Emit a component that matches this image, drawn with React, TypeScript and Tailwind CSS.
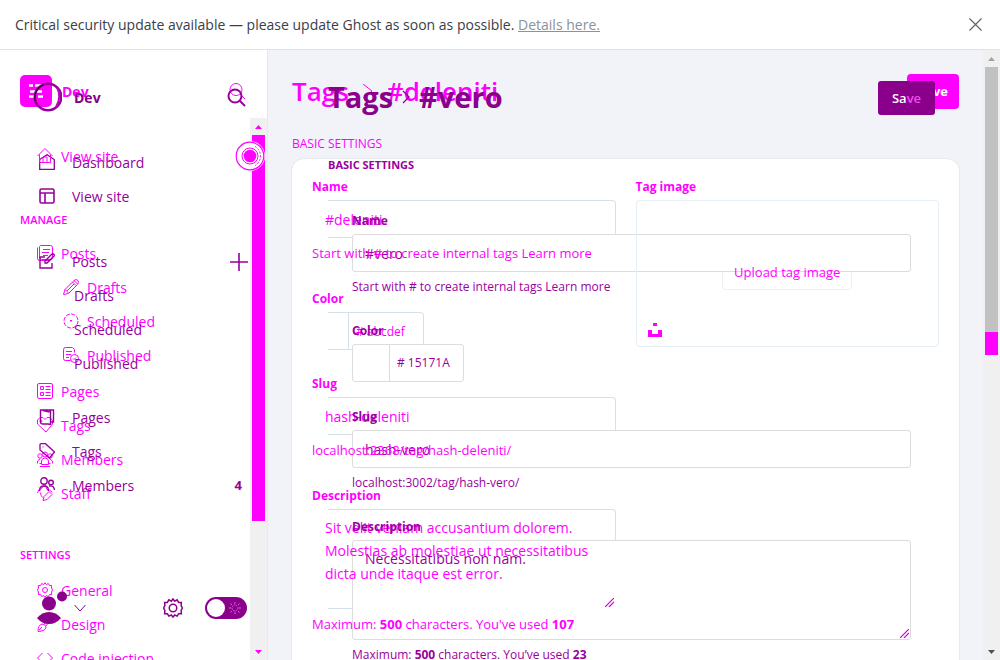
import React from "react";

type Tone = "pink" | "plum";
type NavItem = { label: string; icon?: React.ReactNode; sub?: boolean };

function Icon({ children, size = 16 }: { children: React.ReactNode; size?: number }) {
  return (
    <svg width={size} height={size} viewBox={`0 0 ${size} ${size}`} fill="none" stroke="currentColor" strokeWidth="1" className="shrink-0" aria-hidden="true">
      {children}
    </svg>
  );
}

const gearPath =
  "M8 .7 9.3 2.6 11.3 1.5 12.5 3.5 14.7 3.5 14.5 6 15.5 8 14.5 10 14.7 12.5 12.5 12.5 11.3 14.5 9.3 13.6 8 15.3 6.7 13.6 4.7 14.5 3.5 12.5 1.3 12.5 1.5 10 .5 8 1.5 6 1.3 3.5 3.5 3.5 4.7 1.5 6.7 2.6Z";

const pinkManage: NavItem[] = [
  { label: "Posts", icon: <Icon><path d="M3.5.5h10a2 2 0 0 1 2 2v10a2 2 0 0 1-2 2h-9a2 2 0 0 1-2-2v-11zM.5 2.5v11a2 2 0 0 0 2 2h11M6 4.5h7M5 7.5h7M6 10.5h5" /></Icon> },
  { label: "Drafts", sub: true, icon: <Icon><path d="m.5 15.5 1.500-5 9-9q2-2 4 0 1.500 2-.5 4l-9 9zM2 10.500l3.500 3.500M9.500 3l3.500 3.500M11 1.500l3.500 3.500M4 12l7-7" /></Icon> },
  { label: "Scheduled", sub: true, icon: <Icon><circle cx="8" cy="8" r="7" strokeDasharray="4 1.500" /><path d="M7 7.500h2M8 7v2" /></Icon> },
  { label: "Published", sub: true, icon: <Icon><path d="M7.500 13.500h-5a2 2 0 0 1-2-2v-9a2 2 0 0 1 2-2h7l2 2v3M3 4.500h6M3 7.500h5M3 10.500h3" /><circle cx="11.500" cy="11.500" r="4" /><path d="m10 11.500 1 1 2-2" /></Icon> },
];

const pinkLower: NavItem[] = [
  { label: "Pages", icon: <Icon><rect x=".5" y=".5" width="15" height="15" rx="1.500" /><path d="M3.500 3.500h3v3h-3zM3.500 9.500h3v3h-3zM8.500 3.500h5M8.500 6.500h5M8.500 9.500h5M8.500 12.500h5" /></Icon> },
  { label: "Tags", icon: <Icon><path d="M.5 7V3L3 .5h3L8 2.500l2-2h3l2.500 3v3.500L9 15z" /><circle cx="4" cy="4" r="1" /></Icon> },
  { label: "Members", icon: <Icon><circle cx="8" cy="3.500" r="2.500" /><circle cx="3" cy="5" r="2.200" /><circle cx="13" cy="5" r="2.200" /><path d="M4.500 13.500V10q.5-3 3.500-3t3.500 3v3.500zM.5 12.500V10L3 8M2.500 12.500h2M15.500 12.500V10L13 8M13.500 12.500h-2M3 15.500h10" /></Icon> },
  { label: "Staff", icon: <Icon><path d="M.5 8Q1 4 4.500 3.500q1-3 4-3L10 4.500q4 0 5 3M3.500 7.500q0 3 2 5M6 15.500l1-4 5-5 3 3-5 5z" /></Icon> },
];

const pinkSettings: NavItem[] = [
  { label: "General", icon: <Icon><path d={gearPath} /><circle cx="8" cy="8" r="2.500" /></Icon> },
  { label: "Design", icon: <Icon><path d="M15.500.5 7 8M15.500.5 9 10M5 8q3 0 4 3 0 4-8 4.500Q1 9 5 8zM2 14l3-3" /></Icon> },
  { label: "Code injection", icon: <Icon><path d="M5.500 3 .5 8l5 5M10.500 3l5 5-5 5" /></Icon> },
];

const plumTop: NavItem[] = [
  { label: "Dashboard", icon: <Icon><path d="M.7 15.300h14.600V5.500L8 .7.700 5.500z" strokeWidth="1.300" /></Icon> },
  { label: "View site", icon: <Icon><path d="M2.500 1h11A1.500 1.500 0 0 1 15 2.500v11a1.500 1.500 0 0 1-1.500 1.500h-11A1.500 1.500 0 0 1 1 13.500v-11A1.500 1.500 0 0 1 2.500 1zM1 5h14M6 5v10" strokeWidth="1.600" /></Icon> },
];

const plumPosts: NavItem[] = [
  { label: "Posts", icon: <Icon><path d="M6 4H1v11h12v-5M6 10V8l7-7q1-.5 2 .5.500.8 0 1.500l-7 7z" strokeWidth="1.400" /></Icon> },
  { label: "Drafts", sub: true },
  { label: "Scheduled", sub: true },
  { label: "Published", sub: true },
];

const plumLower: NavItem[] = [
  { label: "Pages", icon: <Icon><path d="M1.500 1h9l1 1.500v13L9 15H4q-2.500 0-2.500-2zM4 1.500l6.500 1.500M10.500 1h4v12h-3" strokeWidth="1.400" /></Icon> },
  { label: "Tags", icon: <Icon><path d="M1 1.500Q1 .7 2 .7h4.500L15.500 9l-5 6L1 7z" strokeWidth="1.300" /><path d="M3.500 4h1" /></Icon> },
  { label: "Members", icon: <Icon><circle cx="5" cy="4" r="3.200" strokeWidth="1.400" /><circle cx="12" cy="5.500" r="2.300" strokeWidth="1.400" /><path d="M.7 14v-1.500Q1 9 5 9t4.300 3.500V14M10 9q5-1 5.500 4" strokeWidth="1.400" /></Icon> },
];

function NavList({ items, tone }: { items: NavItem[]; tone: Tone }) {
  const pink = tone === "pink";
  return (
    <ul>
      {items.map((it) => (
        <li key={it.label} className={pink ? (it.sub ? "pl-[63px]" : "pl-[37px]") : it.sub ? "pl-[74px]" : "pl-[39px]"}>
          <a href="#" className={pink ? "flex h-[34px] items-center gap-2" : "flex h-[34px] items-center gap-[17px]"}>
            {it.icon}
            <span>{it.label}</span>
          </a>
        </li>
      ))}
    </ul>
  );
}

function PinkSidebar() {
  return (
    <nav className="min-w-0 pt-[25px] text-[14px] text-[#ff00ff]">
      <div className="flex h-8 items-center gap-2.5 pl-5 pr-1">
        <svg width="32" height="32" viewBox="0 0 32 32" aria-hidden="true">
          <rect width="32" height="32" rx="5" fill="currentColor" />
          <path d="M9 10.500h4M15 10.500h7M10 16.500h12M9 21.500h7M18 21.500h5" stroke="#fff" strokeWidth="2.500" />
        </svg>
        <span className="flex-1 font-bold">Dev</span>
        <button aria-label="Search">
          <svg width="18" height="18" viewBox="0 0 18 18" fill="none" stroke="currentColor" aria-hidden="true">
            <circle cx="8" cy="7.500" r="6" />
            <path d="m12 12 5 5" />
          </svg>
        </button>
      </div>
      <div className="relative mt-8">
        <NavList tone="pink" items={[{ label: "View site", icon: <Icon><path d="M.5 8 8 .5 15.500 8M2.500 6.500v8h11v-8M6 14.500V9h4v5.500" /></Icon> }]} />
        <button aria-label="Preview site" className="absolute -right-[15px] top-0.5 z-10">
          <svg width="30" height="30" viewBox="0 0 30 30" fill="none" aria-hidden="true">
            <circle cx="15" cy="15" r="15" fill="#fff" />
            <circle cx="15" cy="15" r="13.800" stroke="currentColor" strokeWidth="1.200" />
            <path d="M20 5.500A11 11 0 0 1 20 24.500" stroke="currentColor" strokeDasharray="2 1.500" />
            <circle cx="15" cy="15" r="8" stroke="currentColor" />
            <circle cx="15" cy="15" r="6.300" fill="currentColor" />
          </svg>
        </button>
      </div>
      <h2 className="mt-[39px] pl-5 text-[11px] font-semibold leading-4">MANAGE</h2>
      <div className="mt-2">
        <NavList tone="pink" items={pinkManage} />
      </div>
      <div className="mt-0.5">
        <NavList tone="pink" items={pinkLower} />
      </div>
      <h2 className="mt-[37px] pl-5 text-[11px] font-semibold leading-4">SETTINGS</h2>
      <div className="mt-2.5">
        <NavList tone="pink" items={pinkSettings} />
      </div>
    </nav>
  );
}

function PlumSidebar() {
  return (
    <nav className="min-w-0 pt-8 text-[14px] text-[#97009b]">
      <div className="flex h-[30px] items-center gap-3 pl-8 pr-1">
        <svg width="30" height="30" viewBox="0 0 30 30" fill="none" stroke="currentColor" aria-hidden="true">
          <circle cx="16" cy="15" r="13.200" strokeWidth="2.600" />
          <path d="M25 5.500Q30 15 24 25" strokeWidth="2" stroke="#c000c8" />
          <path d="M3.300 19A13 13 0 0 1 12 2.800" stroke="#3d0a40" strokeWidth="1.400" />
        </svg>
        <span className="flex-1 font-bold text-[#85008a]">Dev</span>
        <button aria-label="Search site">
          <svg width="19" height="19" viewBox="0 0 19 19" fill="none" stroke="currentColor" strokeWidth="2" aria-hidden="true">
            <circle cx="8" cy="8" r="6.500" />
            <path d="m12.500 12.500 5.500 5.500" />
          </svg>
        </button>
      </div>
      <div className="mt-[33px]">
        <NavList tone="plum" items={plumTop} />
      </div>
      <div className="mt-[31px] flex justify-between">
        <NavList tone="plum" items={plumPosts} />
        <button aria-label="New post" className="flex h-9 items-center pr-0.5">
          <svg width="18" height="18" viewBox="0 0 18 18" stroke="currentColor" strokeWidth="1.600" aria-hidden="true">
            <path d="M9 0v18M0 9h18" />
          </svg>
        </button>
      </div>
      <div className="mt-5 flex items-end justify-between">
        <NavList tone="plum" items={plumLower} />
        <span className="pr-2 text-[13px] font-bold leading-[34px]">4</span>
      </div>
      <div className="mt-[89px] flex h-[34px] items-center pl-9 pr-[3px] text-[#8b008b]">
        <button aria-label="Account menu" className="flex items-center gap-1.5">
          <svg width="32" height="34" viewBox="0 0 32 34" fill="currentColor" aria-hidden="true">
            <circle cx="13" cy="12.500" r="7" />
            <path d="M1 27q5-6 12-6t12 6q-5 6-12 6T1 27z" />
            <circle cx="26" cy="5.500" r="5" />
          </svg>
          <svg width="12" height="8" viewBox="0 0 12 8" fill="none" stroke="currentColor" aria-hidden="true">
            <path d="m.5 1 5.500 6 5.500-6" />
          </svg>
        </button>
        <span className="flex-1" />
        <button aria-label="Settings">
          <svg width="20" height="20" viewBox="0 0 16 16" fill="none" stroke="currentColor" strokeWidth="1.200" aria-hidden="true">
            <path d={gearPath} />
            <circle cx="8" cy="8" r="3" />
          </svg>
        </button>
        <button role="switch" aria-checked="false" aria-label="Night shift" className="ml-[22px] flex h-[22px] w-[42px] items-center justify-between rounded-full bg-[#8b008b] pl-0.5 pr-1.5">
          <span className="size-[18px] rounded-full bg-white" />
          <svg width="12" height="12" viewBox="0 0 12 12" fill="none" stroke="#e060e0" aria-hidden="true">
            <circle cx="6" cy="6" r="3" strokeDasharray="1.500 1" />
            <path d="M6 0v2M6 10v2M0 6h2M10 6h2M1.500 1.500l1.500 1.500M9 9l1.500 1.500M1.500 10.500 3 9M9 3l1.500-1.500" />
          </svg>
        </button>
      </div>
    </nav>
  );
}

function Arrow({ down = false }: { down?: boolean }) {
  return (
    <svg width="7" height="4" viewBox="0 0 7 4" fill="currentColor" aria-hidden="true">
      <path d={down ? "M0 0h7L3.500 4z" : "M3.500 0 7 4H0z"} />
    </svg>
  );
}

const labelClass = {
  pink: "block w-fit text-[12px] font-bold leading-4 mb-[5px] relative z-20",
  plum: "block w-fit text-[12px] font-bold leading-4 mb-[5px] relative z-30",
};

function Label({ tone, htmlFor, children }: { tone: Tone; htmlFor: string; children: React.ReactNode }) {
  return (
    <label htmlFor={htmlFor} className={labelClass[tone]}>
      {children}
    </label>
  );
}

function TextBox({ tone, id, value }: { tone: Tone; id: string; value: string }) {
  if (tone === "plum") {
    return <input id={id} defaultValue={value} className="relative z-10 block h-[38px] w-full rounded-[3px] border border-[#dcdcdc] bg-white px-3 text-[14px] outline-none" />;
  }
  return (
    <div className="grid *:col-start-1 *:row-start-1">
      <span className="ml-4 rounded-r-[4px] border border-l-0 border-[#d3e1eb]" />
      <input id={id} defaultValue={value} className="relative z-20 h-[38px] w-full bg-transparent px-[13px] text-[14px] outline-none" />
    </div>
  );
}

function Grip() {
  return (
    <span className="pointer-events-none absolute bottom-0.5 right-0.5 z-30">
      <svg width="9" height="9" viewBox="0 0 9 9" fill="none" stroke="#d400d8" strokeWidth="1.200" aria-hidden="true">
        <path d="M0 9 9 0M4 9l5-5" />
      </svg>
    </span>
  );
}

function PinkForm() {
  return (
    <section className="min-w-0 px-6 pt-6 text-[#ff00ff]">
      <header className="flex h-[35px] items-center justify-between">
        <h1 className="flex items-center gap-3.5 pb-0.5 text-[26px] font-semibold leading-8">
          <a href="#">Tags</a>
          <svg width="10" height="14" viewBox="0 0 10 14" fill="none" stroke="currentColor" aria-hidden="true"><path d="m0 0 9 7-9 7" /></svg>
          <span>#deleniti</span>
        </h1>
        <button className="h-[35px] w-[52px] rounded-[4px] bg-[#ff00ff] text-[13px] font-bold text-white">Save</button>
      </header>
      <h2 className="mt-[27px] text-[12px] leading-4">BASIC SETTINGS</h2>
      <div className="mt-[7px] grid grid-cols-2 items-start gap-5 rounded-[12px] bg-white p-5 pb-12 shadow-[0_0_2px_rgba(0,0,0,0.14)]">
        <div>
          <Label tone="pink" htmlFor="p-name">Name</Label>
          <TextBox tone="pink" id="p-name" value="#deleniti" />
          <p className="relative z-20 mt-[7px] text-[13px] leading-4">Start with # to create internal tags <a href="#">Learn more</a></p>
          <div className="mt-[30px]">
            <Label tone="pink" htmlFor="p-color">Color</Label>
            <div className="grid w-28 *:col-start-1 *:row-start-1">
              <span className="ml-4 flex rounded-r-[4px] border border-l-0 border-[#d3e1eb]">
                <span className="w-[21px] border-r border-[#d3e1eb]" />
              </span>
              <input id="p-color" defaultValue="# abcdef" className="relative z-20 h-[38px] w-full bg-transparent pl-[44px] text-[12px] outline-none" />
            </div>
          </div>
          <div className="mt-[26px]">
            <Label tone="pink" htmlFor="p-slug">Slug</Label>
            <TextBox tone="pink" id="p-slug" value="hash-deleniti" />
            <p className="relative z-20 mt-[7px] text-[13px] leading-4">localhost:2368/tag/hash-deleniti/</p>
          </div>
          <div className="mt-[30px]">
            <Label tone="pink" htmlFor="p-desc">Description</Label>
            <div className="relative grid *:col-start-1 *:row-start-1">
              <span className="ml-4 rounded-r-[4px] border border-l-0 border-[#d3e1eb]" />
              <textarea id="p-desc" defaultValue="Sit velit veniam accusantium dolorem. Molestias ab molestiae ut necessitatibus dicta unde itaque est error." className="relative z-20 h-[100px] w-full resize-none overflow-hidden bg-transparent px-[13px] py-[7px] text-[14px] leading-[23px] outline-none" />
              <Grip />
            </div>
            <p className="relative z-20 mt-[7px] text-[13px] leading-4">Maximum: <b>500</b> characters. You've used <b>107</b></p>
          </div>
        </div>
        <div>
          <Label tone="pink" htmlFor="p-upload">Tag image</Label>
          <div className="relative grid h-[147px] place-items-center">
            <span className="pointer-events-none absolute inset-0 z-20 rounded-[4px] border border-[#e6eef6]" />
            <button id="p-upload" className="mb-0.5 h-[34px] w-[130px] rounded-[4px] border border-[#edf0f2] text-[13px]">
              <span className="relative z-20">Upload tag image</span>
            </button>
            <button aria-label="Select from Unsplash" className="absolute bottom-2.5 left-3 z-20">
              <svg width="14" height="14" viewBox="0 0 14 14" fill="currentColor" aria-hidden="true"><path d="M5 0h4v3H5zM0 7h4v4h6V7h4v7H0z" /></svg>
            </button>
          </div>
        </div>
      </div>
    </section>
  );
}

function PlumForm() {
  return (
    <section className="min-w-0 pl-[60px] pr-12 pt-[31px] text-[#9a009e]">
      <header className="flex h-[34px] items-center justify-between">
        <h1 className="flex items-center gap-[9px] pb-0.5 text-[29px] font-bold leading-8 text-[#8b008b]">
          <a href="#">Tags</a>
          <svg width="8" height="14" viewBox="0 0 8 14" fill="none" stroke="currentColor" strokeWidth="1.200" aria-hidden="true"><path d="m1 1 6 6-6 6" /></svg>
          <span>#vero</span>
        </h1>
        <button className="relative z-10 h-[34px] w-[57px] rounded-[3px] bg-[#8b008b] pt-0.5 text-[13px] font-semibold text-white">
          Sa<span className="text-[#f04df0]">ve</span>
        </button>
      </header>
      <h2 className="relative z-30 mt-[42px] text-[11px] font-bold leading-4">BASIC SETTINGS</h2>
      <div className="mt-10 px-6">
        <Label tone="plum" htmlFor="q-name">Name</Label>
        <TextBox tone="plum" id="q-name" value="#vero" />
        <p className="relative z-30 mt-[7px] text-[12px] font-medium leading-4">Start with # to create internal tags <a href="#">Learn more</a></p>
        <div className="mt-7">
          <Label tone="plum" htmlFor="q-color">Color</Label>
          <div className="relative z-10 flex h-[38px] w-28 rounded-[3px] border border-[#dcdcdc] bg-white">
            <span className="w-[37px] shrink-0 border-r border-[#dcdcdc]" />
            <input id="q-color" defaultValue="# 15171A" className="w-full min-w-0 bg-transparent pl-[7px] text-[12px] outline-none" />
          </div>
        </div>
        <div className="mt-[27px]">
          <Label tone="plum" htmlFor="q-slug">Slug</Label>
          <TextBox tone="plum" id="q-slug" value="hash-vero" />
          <p className="relative z-30 mt-[7px] text-[12px] font-medium leading-4">localhost:3002/tag/hash-vero/</p>
        </div>
        <div className="mt-7">
          <Label tone="plum" htmlFor="q-desc">Description</Label>
          <div className="relative">
            <textarea id="q-desc" defaultValue="Necessitatibus non nam." className="relative z-10 block h-[100px] w-full resize-none rounded-[3px] border border-[#dcdcdc] bg-white px-3 py-2 text-[14px] leading-5 outline-none" />
            <Grip />
          </div>
          <p className="relative z-30 mt-[7px] text-[12px] font-medium leading-4">Maximum: <b>500</b> characters. You’ve used <b>23</b></p>
        </div>
      </div>
    </section>
  );
}

export default function App() {
  return (
    <div className="flex h-screen flex-col overflow-hidden bg-white font-['Open_Sans','Noto_Sans',sans-serif]">
      <div className="flex h-[50px] shrink-0 items-center justify-between border-b border-[#dfe1e3] pl-[15px] pr-[18px] text-[14px] text-[#394047]">
        <p>
          Critical security update available — please update Ghost as soon as possible.{" "}
          <a href="#" className="text-[#8a929a] underline">Details here.</a>
        </p>
        <button aria-label="Close">
          <svg width="13" height="13" viewBox="0 0 13 13" stroke="#5f666d" strokeWidth="1.200" aria-hidden="true"><path d="m.5.5 12 12M12.500.5l-12 12" /></svg>
        </button>
      </div>
      <div className="flex min-h-0 flex-1">
        <aside className="flex w-[268px] shrink-0 overflow-hidden border-r border-[#e5e8ee]">
          <div className="grid h-0 min-w-0 flex-1 *:col-start-1 *:row-start-1">
            <PinkSidebar />
            <PlumSidebar />
          </div>
          <div className="mt-[68px] flex w-[17px] flex-col items-center bg-[#f0f0f0] text-[#ff00ff]">
            <div className="flex h-[17px] items-center"><Arrow /></div>
            <div className="w-full flex-1 px-0.5"><div className="h-[76%] bg-[#ff00ff]" /></div>
            <div className="flex h-[17px] items-center"><Arrow down /></div>
          </div>
        </aside>
        <main className="flex min-w-0 flex-1 overflow-hidden bg-[#f1f3f8]">
          <div className="grid h-0 min-w-0 flex-1 *:col-start-1 *:row-start-1">
            <PinkForm />
            <PlumForm />
          </div>
          <div className="flex w-[17px] flex-col items-center bg-[#f0f0f0] text-[#505050]">
            <div className="flex h-[17px] items-center text-[#a3a3a3]"><Arrow /></div>
            <div className="w-full flex-1 px-0.5">
              <div className="h-[46%] bg-[#c1c1c1]" />
              <div className="h-[4%] bg-[#ff00ff]" />
            </div>
            <div className="flex h-[17px] items-center"><Arrow down /></div>
          </div>
        </main>
      </div>
    </div>
  );
}
